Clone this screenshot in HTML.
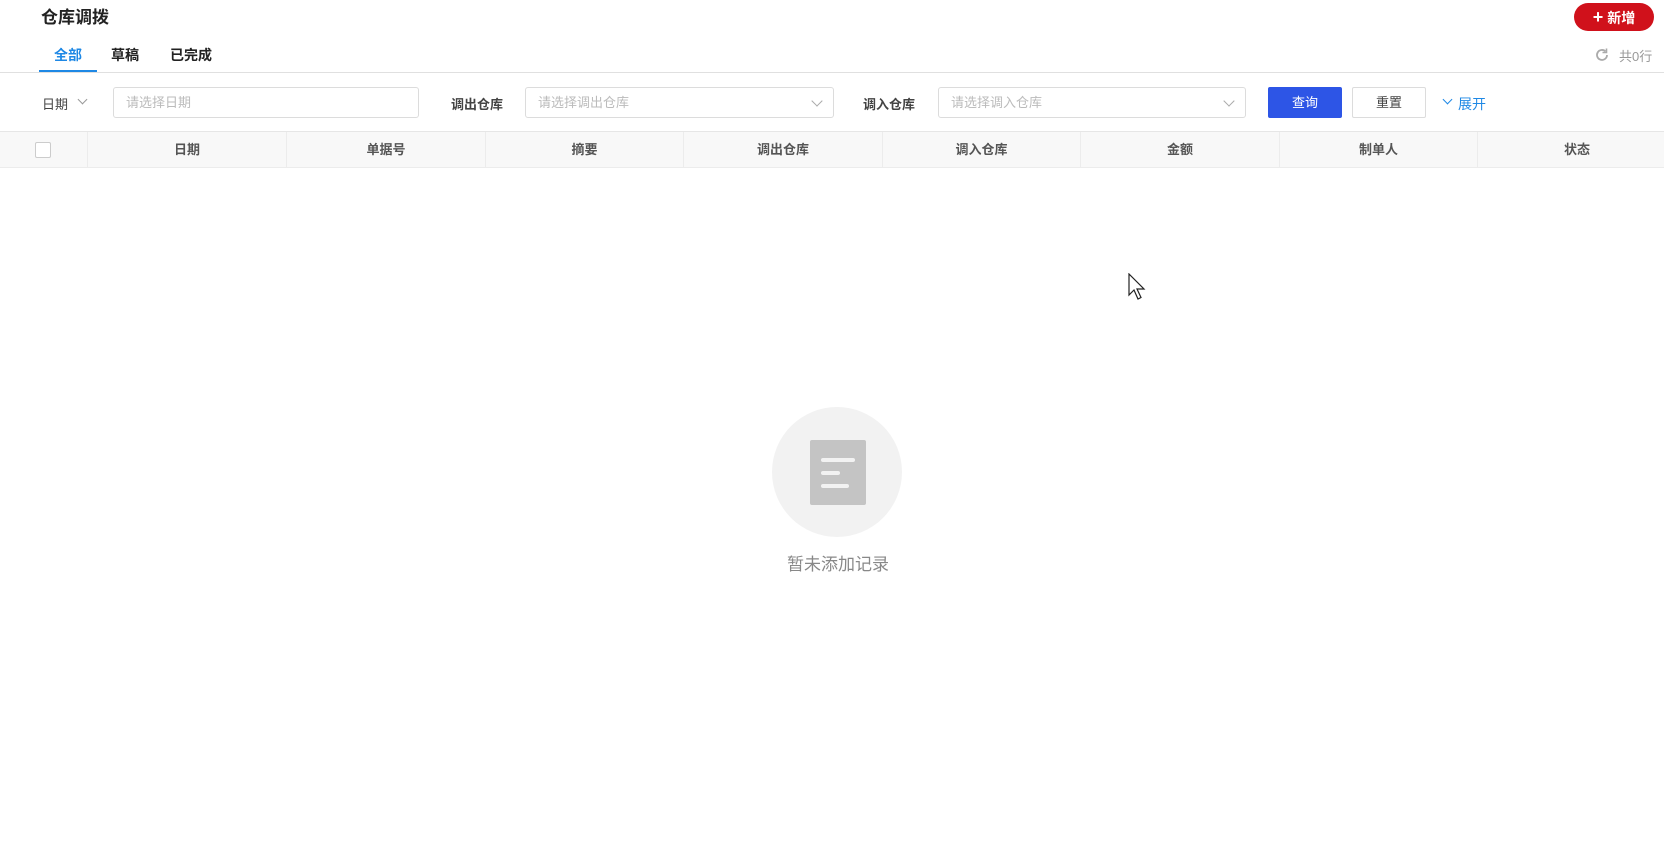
<!DOCTYPE html>
<html><head><meta charset="utf-8"><style>
*{margin:0;padding:0;box-sizing:border-box}
body{width:1664px;height:864px;background:#fff;font-family:"Liberation Sans","Noto Sans CJK SC",sans-serif;position:relative;overflow:hidden;color:#333}
.a{position:absolute}
.inp{position:absolute;border:1px solid #dcdcdc;border-radius:3px;height:31px;top:87px;font-size:13px;color:#bbb;padding:0 12px;line-height:29px}
.lbl{position:absolute;top:94px;font-size:13px;color:#444;font-weight:bold}
.th{position:absolute;top:132px;height:35px;line-height:35px;text-align:center;font-size:13px;font-weight:bold;color:#555;border-left:1px solid #ececec}
.chev{position:absolute;right:12px;top:9px;width:8px;height:8px;border-right:1px solid #aaa;border-bottom:1px solid #aaa;transform:rotate(45deg)}
</style></head><body>
<div class="a" style="left:41px;top:3px;font-size:17px;font-weight:bold;color:#222">仓库调拨</div>
<div class="a" style="left:1574px;top:3px;width:80px;height:28px;border-radius:14px;background:#d0111b;color:#fff;font-size:14px;line-height:28px;text-align:center;font-weight:bold"><span style="font-size:18px">+</span> 新增</div>
<div class="a" style="left:54px;top:45px;font-size:14px;font-weight:bold;color:#1e88e5">全部</div>
<div class="a" style="left:111px;top:45px;font-size:14px;font-weight:bold;color:#222">草稿</div>
<div class="a" style="left:170px;top:45px;font-size:14px;font-weight:bold;color:#222">已完成</div>
<div class="a" style="left:39px;top:70px;width:58px;height:3px;background:#1e88e5"></div>
<div class="a" style="left:0;top:72px;width:1664px;height:1px;background:#e0e0e0"></div>
<svg class="a" style="left:1594px;top:47px" width="16" height="16" viewBox="0 0 16 16"><path d="M13 8a5 5 0 1 1-1.5-3.6" fill="none" stroke="#aaa" stroke-width="1.8"/><path d="M12.5 1.5v4h-4" fill="none" stroke="#aaa" stroke-width="1.6"/></svg>
<div class="a" style="left:1619px;top:46px;font-size:13px;color:#999">共0行</div>
<div class="lbl" style="left:42px;font-weight:normal;color:#444">日期</div>
<div class="a" style="left:79px;top:96px;width:7px;height:7px;border-right:1px solid #999;border-bottom:1px solid #999;transform:rotate(45deg)"></div>
<div class="inp" style="left:113px;width:306px">请选择日期</div>
<div class="lbl" style="left:451px">调出仓库</div>
<div class="inp" style="left:525px;width:309px">请选择调出仓库<div class="chev"></div></div>
<div class="lbl" style="left:863px">调入仓库</div>
<div class="inp" style="left:938px;width:308px">请选择调入仓库<div class="chev"></div></div>
<div class="a" style="left:1268px;top:87px;width:74px;height:31px;background:#2d55e6;border-radius:2px;color:#fff;font-size:13px;line-height:31px;text-align:center">查询</div>
<div class="a" style="left:1352px;top:87px;width:74px;height:31px;border:1px solid #dcdcdc;border-radius:2px;color:#444;font-size:13px;line-height:29px;text-align:center">重置</div>
<div class="a" style="left:1444px;top:96px;width:7px;height:7px;border-right:1.5px solid #1e88e5;border-bottom:1.5px solid #1e88e5;transform:rotate(45deg)"></div>
<div class="a" style="left:1458px;top:94px;font-size:14px;color:#1e88e5">展开</div>
<div class="a" style="left:0;top:131px;width:1664px;height:37px;background:#f8f8f8;border-top:1px solid #e6e6e6;border-bottom:1px solid #ececec"></div>
<div class="a" style="left:35px;top:142px;width:16px;height:16px;border:1px solid #ccc;border-radius:2px;background:#fff"></div>
<div class="th" style="left:87px;width:199px">日期</div>
<div class="th" style="left:286px;width:199px">单据号</div>
<div class="th" style="left:485px;width:198px">摘要</div>
<div class="th" style="left:683px;width:199px">调出仓库</div>
<div class="th" style="left:882px;width:198px">调入仓库</div>
<div class="th" style="left:1080px;width:199px">金额</div>
<div class="th" style="left:1279px;width:198px">制单人</div>
<div class="th" style="left:1477px;width:199px">状态</div>
<div class="a" style="left:772px;top:407px;width:130px;height:130px;border-radius:50%;background:#f2f2f2"></div>
<div class="a" style="left:810px;top:440px;width:56px;height:65px;background:#c4c4c4;border-radius:2px"></div>
<div class="a" style="left:821px;top:458px;width:34px;height:4px;border-radius:2px;background:#f2f2f2"></div>
<div class="a" style="left:821px;top:471px;width:19px;height:4px;border-radius:2px;background:#f2f2f2"></div>
<div class="a" style="left:821px;top:484px;width:28px;height:4px;border-radius:2px;background:#f2f2f2"></div>
<div class="a" style="left:738px;top:550px;width:200px;text-align:center;font-size:17px;color:#888">暂未添加记录</div>
<svg class="a" style="left:1128px;top:273px" width="20" height="28" viewBox="0 0 20 28"><path d="M1 1v21l5-5 4 9 3-1.5-4-8.5h7z" fill="#fff" stroke="#222" stroke-width="1.2"/></svg>
</body></html>
